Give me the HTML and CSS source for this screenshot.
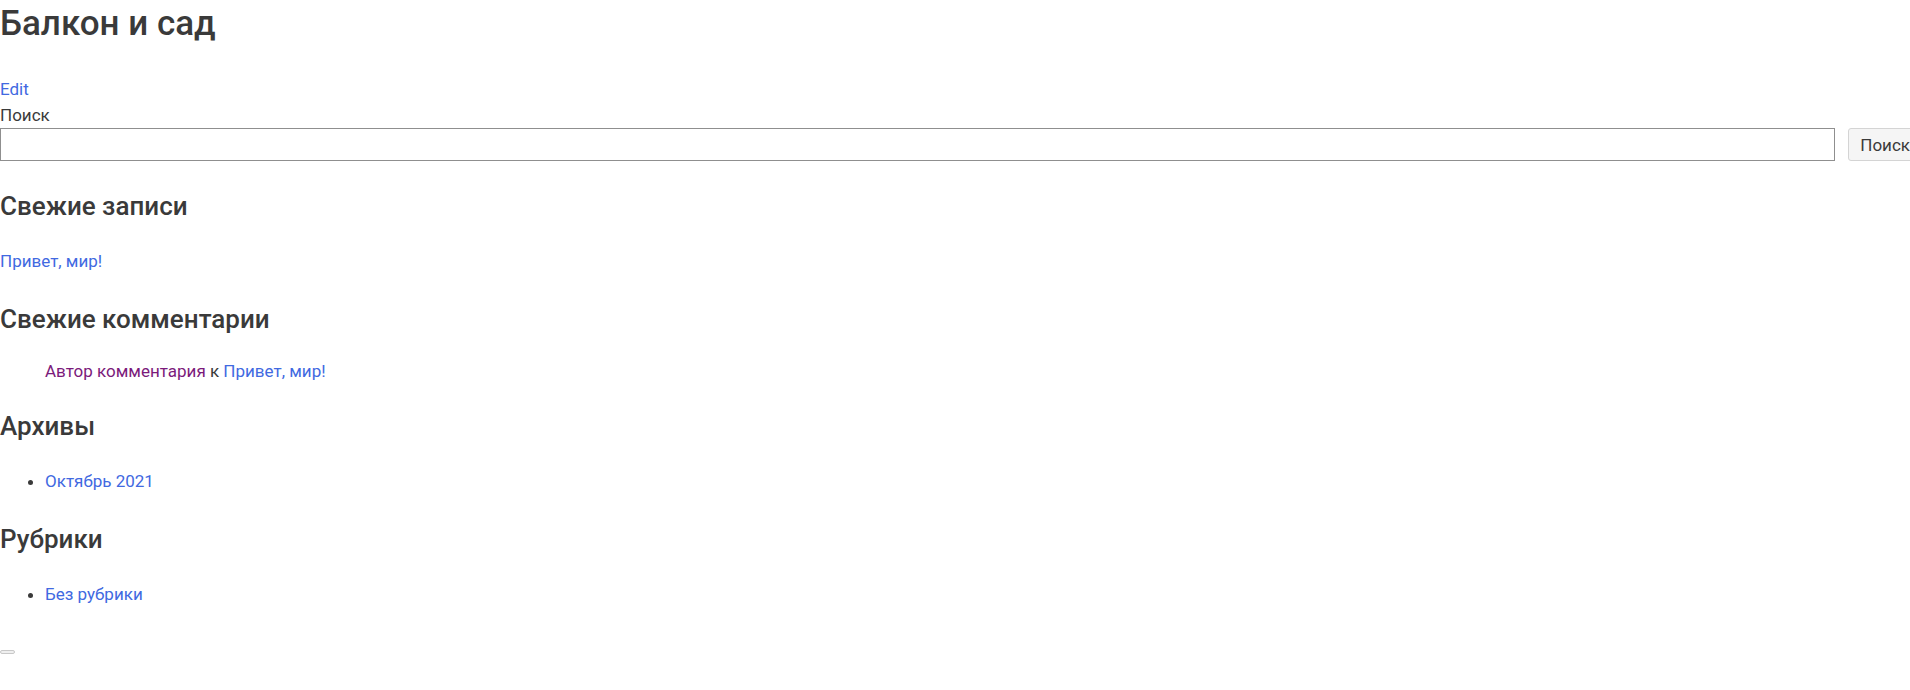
FILE: index.html
```html
<!DOCTYPE html>
<html lang="ru">

<head>
    <meta charset="utf-8">
    <meta name="viewport" content="width=device-width, initial-scale=1">
    <link rel="stylesheet" href="styles.css">
    <title>Балкон и сад</title>
</head>

<body>
    <!-- Шапка сайта -->
    <h1 class="site-title">Балкон и сад</h1>

    <a class="edit-link" href="#">Edit</a>

    <!-- Поиск -->
    <form class="search-form" onsubmit="return false;">
        <label class="search-label" for="s">Поиск</label>
        <div class="search-row">
            <input type="text" id="s" class="search-field">
            <button type="submit" class="search-button">Поиск</button>
        </div>
    </form>

    <!-- Виджеты -->
    <div class="widget">
        <h2 class="widget-title">Свежие записи</h2>
        <ul class="plain-list">
            <li><a href="#">Привет, мир!</a></li>
        </ul>
    </div>

    <div class="widget">
        <h2 class="widget-title">Свежие комментарии</h2>
        <ol class="comments-list">
            <li><a class="visited" href="#">Автор комментария</a> к <a href="#">Привет, мир!</a></li>
        </ol>
    </div>

    <div class="widget">
        <h2 class="widget-title">Архивы</h2>
        <ul class="bullet-list">
            <li><a href="#">Октябрь 2021</a></li>
        </ul>
    </div>

    <div class="widget">
        <h2 class="widget-title">Рубрики</h2>
        <ul class="bullet-list">
            <li><a href="#">Без рубрики</a></li>
        </ul>
    </div>

    <button class="empty-button" type="button"></button>
</body>

</html>
```

FILE: styles.css
```css
/* Базовые стили */
html {
    overflow-x: hidden;
}

body {
    margin: 0;
    font-family: Roboto, "Noto Sans", sans-serif;
    font-size: 17px;
    line-height: 26px;
    color: #3a3a3a;
    background: #fff;
}

a {
    color: #4169e1;
    text-decoration: none;
}

a.visited {
    color: #7b1a7b;
}

.site-title {
    margin: 0;
    font-size: 35px;
    line-height: 48px;
    font-weight: 500;
    color: #3a3a3a;
}

.edit-link {
    display: block;
    margin-top: 28px;
}

.search-label {
    display: block;
}

.search-row {
    display: flex;
    gap: 13px;
    width: calc(100% + 12px);
}

.search-field {
    flex: 1;
    height: 33px;
    box-sizing: border-box;
    margin: 0;
    border: 1px solid #8f8f8f;
    border-radius: 0;
    font-family: inherit;
    font-size: 17px;
}

.search-button {
    height: 33px;
    margin: 0;
    padding: 0 11px;
    border: 1px solid #d4d4d4;
    border-radius: 3px;
    background-color: #f5f5f5;
    color: #3a3a3a;
    font-family: inherit;
    font-size: 17px;
}

.widget {
    margin-top: 29px;
}

.widget-title {
    margin: 0 0 26px;
    font-size: 26px;
    line-height: 32px;
    font-weight: 500;
    color: #3a3a3a;
}

.plain-list {
    list-style: none;
    margin: 0;
    padding: 0;
}

.comments-list {
    list-style: none;
    margin: 0;
    padding-left: 45px;
    line-height: 20px;
}

.bullet-list {
    margin: 0;
    padding-left: 45px;
}

.empty-button {
    display: block;
    margin: 43px 0 0;
    width: 15px;
    height: 4px;
    padding: 0;
    border: 1px solid #c8c8c8;
    border-radius: 2px;
    background-color: #efefef;
}
```
